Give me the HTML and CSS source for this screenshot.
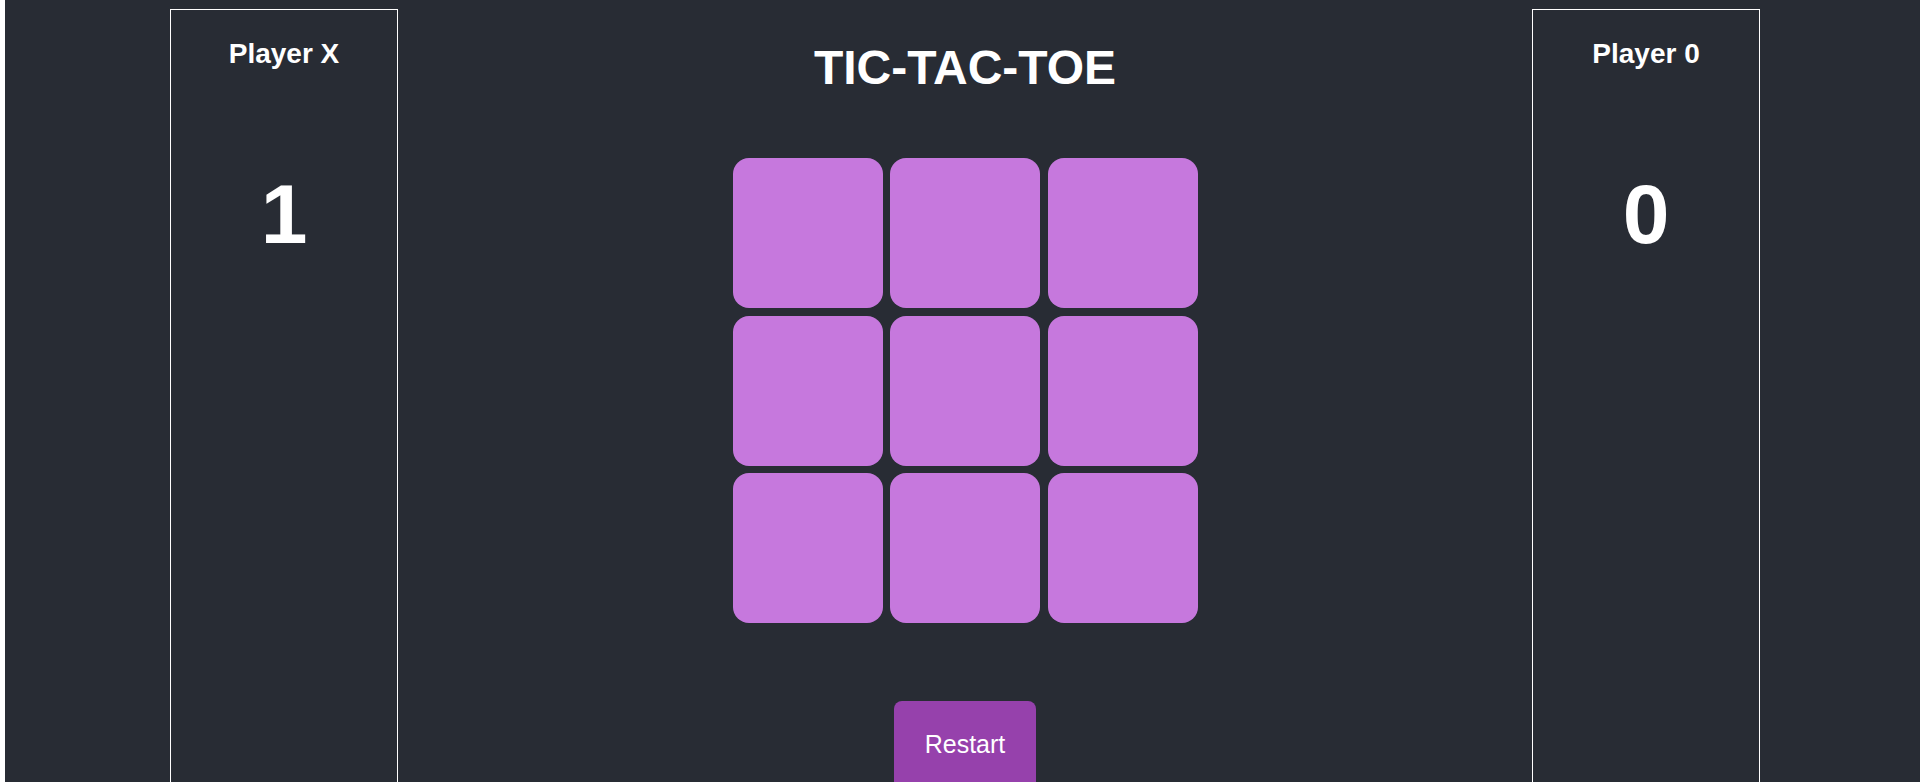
FILE: index.html
```html
<!DOCTYPE html>
<html lang="en">
<head>
<meta charset="utf-8">
<title>Tic-Tac-Toe</title>
<link rel="stylesheet" href="styles.css">
</head>
<body>
<div class="app">
  <section class="panel">
    <h2 class="panel-title">Player X</h2>
    <div class="score">1</div>
  </section>
  <main class="game">
    <h1 class="title">TIC-TAC-TOE</h1>
    <div class="board">
      <div class="cell"></div>
      <div class="cell"></div>
      <div class="cell"></div>
      <div class="cell"></div>
      <div class="cell"></div>
      <div class="cell"></div>
      <div class="cell"></div>
      <div class="cell"></div>
      <div class="cell"></div>
    </div>
    <button class="restart">Restart</button>
  </main>
  <section class="panel">
    <h2 class="panel-title">Player 0</h2>
    <div class="score">0</div>
  </section>
</div>
</body>
</html>
```

FILE: styles.css
```css
html {
  background: #ffffff;
}
body {
  margin: 0;
  font-family: "Liberation Sans", Arial, sans-serif;
  color: #ffffff;
  overflow: hidden;
}
.app {
  margin-left: 5px;
  width: 1915px;
  height: 900px;
  background: #282c34;
  display: flex;
  justify-content: space-between;
  align-items: flex-start;
  padding: 9px 160px 0 165px;
  box-sizing: border-box;
}
.panel {
  width: 228px;
  height: 880px;
  box-sizing: border-box;
  border: 1px solid #ffffff;
  display: flex;
  flex-direction: column;
  align-items: center;
  padding-top: 28px;
}
.panel-title {
  margin: 0;
  font-size: 28px;
  font-weight: bold;
  line-height: 32px;
}
.score {
  margin-top: 96px;
  font-size: 84px;
  font-weight: bold;
  line-height: 96px;
}
.game {
  display: flex;
  flex-direction: column;
  align-items: center;
  padding-top: 31px;
}
.title {
  margin: 0;
  font-size: 48px;
  font-weight: bold;
  line-height: 55px;
}
.board {
  margin-top: 63px;
  display: grid;
  grid-template-columns: repeat(3, 150px);
  grid-template-rows: repeat(3, 150px);
  gap: 7.5px;
}
.cell {
  background: #c678dd;
  border-radius: 16px;
}
.restart {
  margin-top: 78px;
  width: 142px;
  height: 100px;
  padding: 29px 0 0;
  align-self: center;
  display: flex;
  justify-content: center;
  align-items: flex-start;
  background: #9641ac;
  color: #ffffff;
  border: none;
  border-radius: 8px;
  font-family: "Liberation Sans", Arial, sans-serif;
  font-size: 25px;
  line-height: 29px;
}
```
